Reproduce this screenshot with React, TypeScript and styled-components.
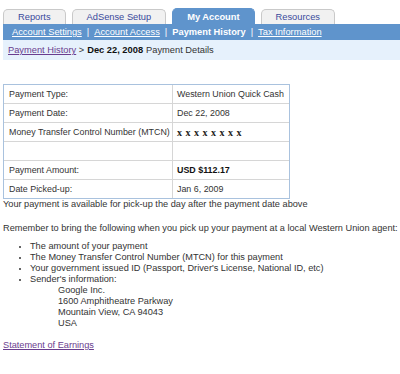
import React from 'react';
import styled, { createGlobalStyle } from 'styled-components';

const GlobalStyle = createGlobalStyle`
  body {
    margin: 0;
    background: #fff;
    font-family: 'Liberation Sans', Arial, sans-serif;
    font-size: 9.2px;
    color: #333;
  }
`;

const Page = styled.div`
  padding: 8px 0 0 3px;
`;

const TabRow = styled.div`
  display: flex;
  align-items: flex-end;
  gap: 6px;
  height: 16px;
`;

const Tab = styled.div<{ $active?: boolean }>`
  height: ${(p) => (p.$active ? '16px' : '15px')};
  box-sizing: border-box;
  padding: 0 14px;
  display: flex;
  align-items: center;
  justify-content: center;
  border-radius: 5px 5px 0 0;
  font-size: 9.3px;
  background: ${(p) => (p.$active ? '#5f94cc' : '#f1f1f1')};
  border: 1px solid ${(p) => (p.$active ? '#5f94cc' : '#c9c9c9')};
  border-bottom: none;
  color: ${(p) => (p.$active ? '#fff' : '#3a4a9c')};
  font-weight: ${(p) => (p.$active ? 'bold' : 'normal')};
`;

const SubNav = styled.div`
  height: 16px;
  background: #5f94cc;
  display: flex;
  align-items: center;
  padding-left: 9px;
  font-size: 9.3px;
  color: #fff;
`;

const SubLink = styled.a<{ $current?: boolean }>`
  color: #fff;
  text-decoration: ${(p) => (p.$current ? 'none' : 'underline')};
  font-weight: ${(p) => (p.$current ? 'bold' : 'normal')};
`;

const Sep = styled.span`
  margin: 0 5px;
`;

const Crumbs = styled.div`
  height: 20px;
  background: #e6f1fc;
  display: flex;
  align-items: center;
  padding-left: 5px;
  font-size: 9.3px;
  color: #333;
`;

const VisitedLink = styled.a`
  color: #6a3d8e;
  text-decoration: underline;
`;

const Strong = styled.b`
  margin: 0 3px;
  color: #111;
`;

const DetailsTable = styled.table`
  margin-top: 24px;
  width: 287px;
  table-layout: fixed;
  border: 1px solid #a9c2de;
  border-spacing: 0;
  font-size: 8.9px;
`;

const Cell = styled.td<{ $label?: boolean }>`
  height: 18px;
  padding: 0 0 0 ${(p) => (p.$label ? '5px' : '4px')};
  white-space: nowrap;
  overflow: hidden;
  width: ${(p) => (p.$label ? '163px' : 'auto')};
  border-left: ${(p) => (p.$label ? 'none' : '1px solid #d6d6d6')};
  tr + tr & {
    border-top: 1px solid #d6d6d6;
  }
`;

const Mtcn = styled.span`
  font-family: 'Liberation Serif', 'Times New Roman', serif;
  font-weight: bold;
  font-size: 10px;
  word-spacing: 1px;
  color: #222;
`;

const Amount = styled.b`
  color: #111;
`;

const Para = styled.p<{ $gap?: number }>`
  margin: ${(p) => p.$gap ?? 0}px 0 0;
  line-height: 11px;
`;

const List = styled.ul`
  margin: 7px 0 0;
  padding-left: 27px;
  line-height: 11px;
  list-style: disc;
  li::marker {
    font-size: 8px;
  }
`;

const Address = styled.div`
  padding-left: 28px;
  line-height: 11px;
`;

const Footer = styled.div`
  margin-top: 11px;
  line-height: 11px;
`;

const rows: { label: string; value: React.ReactNode }[] = [
  { label: 'Payment Type:', value: 'Western Union Quick Cash' },
  { label: 'Payment Date:', value: 'Dec 22, 2008' },
  {
    label: 'Money Transfer Control Number (MTCN)',
    value: <Mtcn>x x x x x x x x</Mtcn>,
  },
  { label: '', value: '' },
  { label: 'Payment Amount:', value: <Amount>USD $112.17</Amount> },
  { label: 'Date Picked-up:', value: 'Jan 6, 2009' },
];

const subLinks = ['Account Settings', 'Account Access', 'Payment History', 'Tax Information'];

const App = () => {
  return (
    <Page>
      <GlobalStyle />
      <TabRow>
        <Tab>Reports</Tab>
        <Tab>AdSense Setup</Tab>
        <Tab $active>My Account</Tab>
        <Tab>Resources</Tab>
      </TabRow>
      <SubNav>
        {subLinks.map((l, i) => (
          <React.Fragment key={l}>
            {i > 0 && <Sep>|</Sep>}
            <SubLink href="#" $current={l === 'Payment History'}>
              {l}
            </SubLink>
          </React.Fragment>
        ))}
      </SubNav>
      <Crumbs>
        <VisitedLink href="#">Payment History</VisitedLink>
        &nbsp;&gt;<Strong>Dec 22, 2008</Strong>Payment Details
      </Crumbs>
      <DetailsTable>
        <tbody>
          {rows.map((r, i) => (
            <tr key={i}>
              <Cell $label>{r.label || '\u00a0'}</Cell>
              <Cell>{r.value || '\u00a0'}</Cell>
            </tr>
          ))}
        </tbody>
      </DetailsTable>
      <Para>Your payment is available for pick-up the day after the payment date above</Para>
      <Para $gap={13}>
        Remember to bring the following when you pick up your payment at a local Western Union agent:
      </Para>
      <List>
        <li>The amount of your payment</li>
        <li>The Money Transfer Control Number (MTCN) for this payment</li>
        <li>Your government issued ID (Passport, Driver's License, National ID, etc)</li>
        <li>
          Sender's information:
          <Address>
            Google Inc.
            <br />
            1600 Amphitheatre Parkway
            <br />
            Mountain View, CA 94043
            <br />
            USA
          </Address>
        </li>
      </List>
      <Footer>
        <VisitedLink href="#">Statement of Earnings</VisitedLink>
      </Footer>
    </Page>
  );
};

export default App;
